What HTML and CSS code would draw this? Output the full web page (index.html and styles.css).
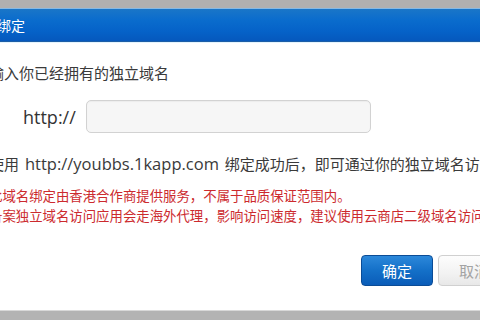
FILE: index.html
```html
<!DOCTYPE html>
<html lang="zh-CN">
<head>
<meta charset="utf-8">
<title>绑定</title>
<link rel="stylesheet" href="styles.css">
</head>
<body>
<div class="backdrop-top"></div>
<div class="dialog">
  <div class="dialog-header">
    <span class="dialog-title">绑定</span>
  </div>
  <div class="dialog-body">
    <p class="lead">输入你已经拥有的独立域名</p>
    <div class="field-row">
      <label class="field-label" for="domain">http://</label>
      <input class="field-input" id="domain" type="text">
    </div>
    <p class="info">使用 <span class="url">http://youbbs.1kapp.com</span> 绑定成功后，即可通过你的独立域名访问</p>
    <div class="notes">
      <p class="note">此域名绑定由香港合作商提供服务，不属于品质保证范围内。</p>
      <p class="note">备案独立域名访问应用会走海外代理，影响访问速度，建议使用云商店二级域名访问。</p>
    </div>
    <div class="actions">
      <button class="btn btn-primary" type="button">确定</button>
      <button class="btn btn-default" type="button">取消</button>
    </div>
  </div>
</div>
<div class="backdrop-bottom"></div>
</body>
</html>
```

FILE: styles.css
```css
html, body {
  margin: 0;
  padding: 0;
}

body {
  width: 480px;
  height: 320px;
  overflow: hidden;
  background: #b2b2b2;
  font-family: "Open Sans", "Noto Sans CJK SC", sans-serif;
  color: #333;
}

.backdrop-top {
  height: 8px;
  background: #b0b0b0;
}

.dialog {
  width: 550px;
  margin-left: -20px;
  background: #fff;
  height: 302px;
  display: flex;
  flex-direction: column;
}

.dialog-header {
  height: 34px;
  box-sizing: border-box;
  border-top: 1px solid #86b9e4;
  border-bottom: 1px solid #1d5ea6;
  background: linear-gradient(#1a76c8 0%, #0a6ccd 35%, #0562c8 70%, #0558bd 100%);
  padding-left: 17px;
  display: flex;
  align-items: center;
  padding-top: 2px;
}

.dialog-title {
  color: #fff;
  font-size: 14px;
  line-height: 20px;
}

.dialog-body {
  flex: 1;
  border-top: 1px solid #e4f4fd;
  padding: 20px 20px 0 9px;
  display: flex;
  flex-direction: column;
}

.lead {
  margin: 0;
  font-size: 15px;
  line-height: 20px;
  color: #3a3a3a;
}

.field-row {
  display: flex;
  align-items: center;
  margin-top: 17px;
  padding-left: 34px;
}

.field-label {
  width: 63px;
  font-size: 18px;
  line-height: 24px;
  color: #333;
}

.field-input {
  width: 285px;
  height: 33px;
  box-sizing: border-box;
  margin: 0;
  border: 1px solid #d2d2d2;
  border-radius: 5px;
  background: #f6f6f6;
  box-shadow: inset 0 1px 1px rgba(0, 0, 0, 0.04);
}

.info {
  margin: 21px 0 0;
  font-size: 15px;
  line-height: 20px;
  white-space: nowrap;
  color: #3a3a3a;
}

.url {
  font-size: 16.5px;
  margin: 0 2px;
}

.notes {
  margin-top: 12px;
}

.note {
  margin: 0;
  font-size: 13.4px;
  line-height: 20px;
  color: #cc2a2e;
  white-space: nowrap;
}

.actions {
  display: flex;
  justify-content: flex-end;
  gap: 5px;
  margin-top: 29px;
}

.btn {
  width: 72px;
  height: 31px;
  box-sizing: border-box;
  border-radius: 4px;
  font-family: "Open Sans", "Noto Sans CJK SC", sans-serif;
  font-size: 15px;
  padding: 0;
}

.btn-primary {
  color: #fff;
  border: 1px solid #0b4c96;
  background: linear-gradient(#2c88da 0%, #1470c8 50%, #0a5cb8 100%);
}

.btn-default {
  color: #a3a3a3;
  border: 1px solid #d0d0d0;
  background: linear-gradient(#fdfdfd 0%, #f2f2f2 60%, #e8e8e8 100%);
}

.backdrop-bottom {
  border-top: 1px solid #d8d8d8;
  height: 10px;
  background: #b3b3b3;
}
```
